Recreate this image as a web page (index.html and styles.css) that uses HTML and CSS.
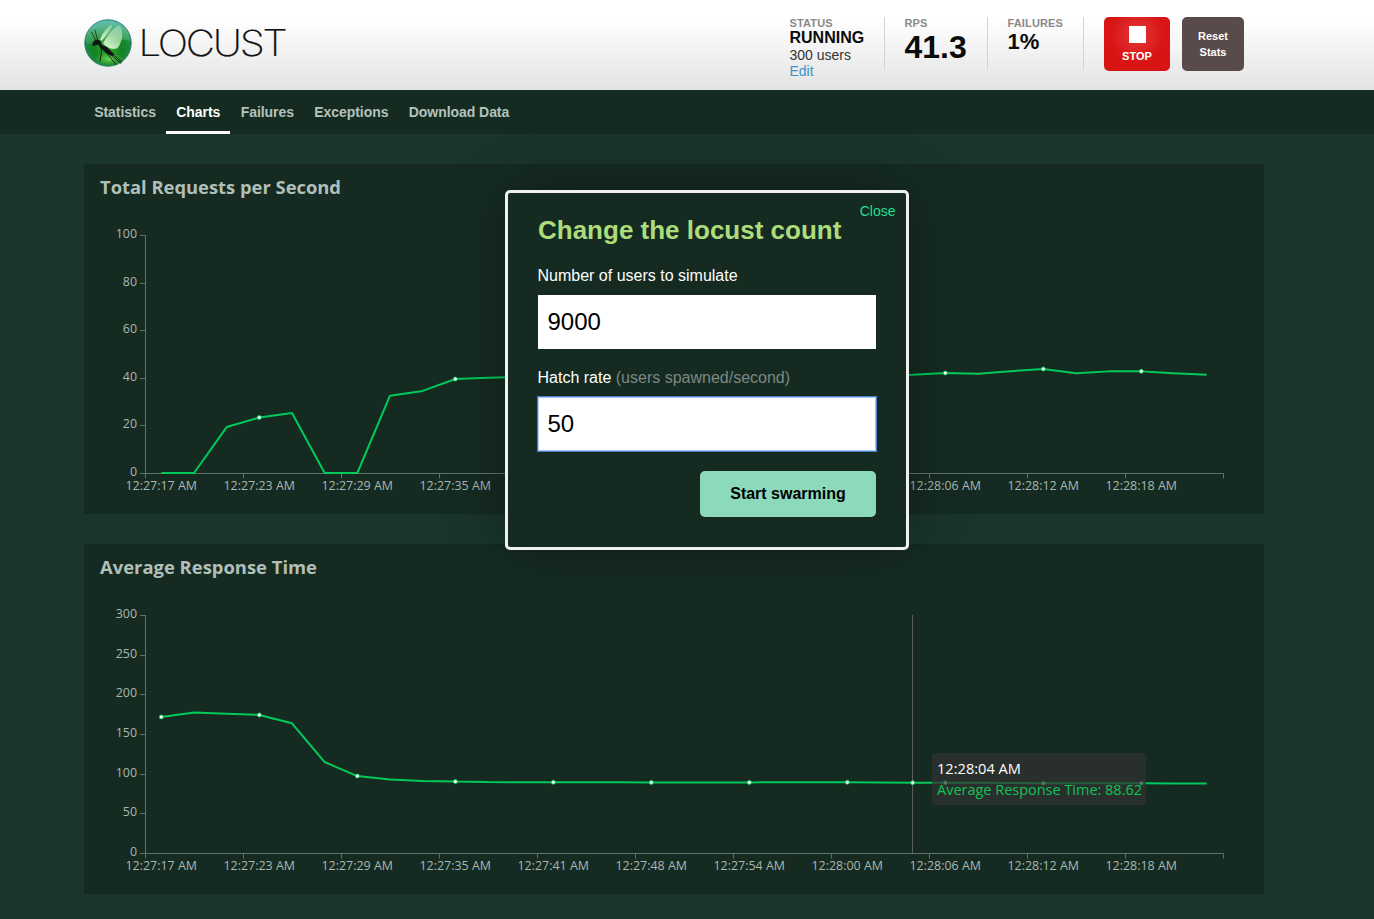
FILE: index.html
```html
<!DOCTYPE html>
<html lang="en">
<head>
<meta charset="utf-8">
<title>Locust</title>
<link rel="stylesheet" href="styles.css">
</head>
<body>
<header class="top">
  <svg class="logo" width="202" height="50" viewBox="0 0 202 50">
    <defs>
      <radialGradient id="orb" cx=".5" cy=".6" r=".6">
        <stop offset="0" stop-color="#3cae32"/><stop offset=".5" stop-color="#128222"/><stop offset=".8" stop-color="#1f8a48"/><stop offset="1" stop-color="#2a8a7c"/>
      </radialGradient>
      <linearGradient id="sheen" x1="0" y1="0" x2="0" y2="1">
        <stop offset="0" stop-color="#6fd0cc" stop-opacity=".75"/><stop offset="1" stop-color="#a5e29a" stop-opacity=".15"/>
      </linearGradient>
      <linearGradient id="wing" x1=".7" y1="0" x2=".3" y2="1">
        <stop offset="0" stop-color="#c3f0c0" stop-opacity=".45"/><stop offset="1" stop-color="#f4fff0" stop-opacity=".85"/>
      </linearGradient>
      <radialGradient id="glow"><stop offset="0" stop-color="#6fd85a"/><stop offset="1" stop-color="#4ec43c" stop-opacity="0"/></radialGradient>
    </defs>
    <circle cx="24" cy="25" r="23.3" fill="url(#orb)" stroke="#28786a" stroke-width=".8"/>
    <ellipse cx="25" cy="41" rx="15" ry="7" fill="url(#glow)"/>
    <path d="M2 25C2 9 13 2.500 24 2.500S46 10 46 23C33 18 17 29 2 25Z" fill="url(#sheen)"/>
    <path d="M16 22C18 15 24 8 28 6.500c1.500 1.500-4 10-10.500 16Z" fill="url(#wing)"/>
    <path d="M19 25.500C23 18 29 9 35 7.500c5 4 4 15-1 22-4 3-10 1-15-4Z" fill="url(#wing)"/>
    <g fill="none" stroke="#101713" stroke-linecap="round">
      <path d="M12 23L7.500 14M13.500 22L11 12" stroke-width=".7"/>
      <path d="M17 29l.5 5-1.500 9M25 35l12 10.500M22 34l10 12.500M27 35l11 9" stroke-width=".9"/>
    </g>
    <path d="M8.500 25l2-2.500 3-1 3 1.500 1.500 4 5 2 7.500 7.500-2 1.500-5.500-2-7-6.500-1.500-3-4 1-2 .5Z" fill="#101713"/>
    <text class="wordmark" x="54.500" y="38" textLength="147" lengthAdjust="spacingAndGlyphs">LOCUST</text>
  </svg>
  <div class="stat stat-status">
    <span class="label">STATUS</span>
    <strong>RUNNING</strong>
    <span class="users">300 users</span>
    <a class="edit">Edit</a>
  </div>
  <div class="stat stat-rps"><span class="label">RPS</span><strong>41.3</strong></div>
  <div class="stat stat-fail"><span class="label">FAILURES</span><strong>1%</strong></div>
  <a class="btn stop"><i class="square"></i>STOP</a>
  <a class="btn reset">Reset<br>Stats</a>
</header>
<nav class="tabs">
  <a>Statistics</a><a class="active">Charts</a><a>Failures</a><a>Exceptions</a><a>Download Data</a>
</nav>
<main class="charts">
  <svg class="panel" id="rps" width="1180" height="350"></svg>
  <section class="chart-wrap">
    <svg class="panel" id="response" width="1180" height="350"></svg>
    <div class="tip">
      <svg width="214" height="52">
        <text class="tip-time" x="5" y="21" textLength="84" lengthAdjust="spacingAndGlyphs">12:28:04 AM</text>
        <text class="tip-value" x="5" y="42" textLength="205" lengthAdjust="spacingAndGlyphs">Average Response Time: 88.62</text>
      </svg>
    </div>
  </section>
</main>
<div class="dialog">
  <a class="close">Close</a>
  <h2>Change the locust count</h2>
  <label>Number of users to simulate</label>
  <div class="field">9000</div>
  <label>Hatch rate <span>(users spawned/second)</span></label>
  <div class="field focused">50</div>
  <div class="submit">Start swarming</div>
</div>
<script src="app.js"></script>
</body>
</html>
```
FILE: styles.css
```css
* { box-sizing: border-box; }
body {
  margin: 0;
  height: 919px;
  overflow: hidden;
  position: relative;
  background: #1a352a;
  font-family: "Liberation Sans", Arial, sans-serif;
}
.top {
  height: 90px;
  padding: 17px 0 0 84px;
  display: flex;
  align-items: flex-start;
  background: linear-gradient(#fff 0, #fff 20%, #e3e3e3 100%);
}
.logo { margin-top: 1px; flex: none; }
.wordmark { font: 200 36px Inter, sans-serif; letter-spacing: -2px; fill: #111; stroke: #111; stroke-width: .2; }
.stat { height: 53px; display: flex; flex-direction: column; border-right: 1px solid #d3d3d3; color: #0b0b0b; white-space: nowrap; }
.label { font-size: 11px; line-height: 12px; letter-spacing: .15px; font-weight: 700; color: #8a8a8a; }
.stat-status { width: 95px; margin-left: 503.5px; }
.stat-status strong { font-size: 16px; line-height: 17px; }
.users { font-size: 14px; line-height: 17px; padding-top: 1px; color: #333; }
.edit { font-size: 14px; line-height: 15px; color: #3a94c9; }
.stat-rps { width: 103px; padding-left: 20px; }
.stat-rps strong { font-size: 32px; line-height: 36px; }
.stat-fail { width: 96px; padding-left: 20px; }
.stat-fail strong { font-size: 22px; line-height: 26px; }
.btn { height: 54px; border-radius: 5px; color: #fff; font-size: 11px; font-weight: 700; text-align: center; line-height: 16px; }
.stop { width: 66px; margin-left: 20.5px; background: radial-gradient(circle at 50% 33%, #e2393b 0, #d91414 27px); }
.square { display: block; width: 17px; height: 17px; margin: 9px auto 5px; background: #fff; }
.reset { width: 62px; margin-left: 12px; padding-top: 11px; background: #594b49; }
.tabs { height: 44px; padding-left: 84px; display: flex; background: #152b22; }
.tabs a { height: 44px; padding: 0 10.2px; line-height: 44px; font-size: 14px; letter-spacing: -.055px; font-weight: 700; color: #b3c3bc; white-space: nowrap; }
.tabs .active { color: #fff; border-bottom: 3px solid #fff; }
.charts { padding: 30px 0 0 84px; display: flex; flex-direction: column; gap: 30px; width: 1264px; }
.panel { display: block; background: #152b22; border-radius: 4px; box-shadow: inset 0 0 0 1px #13271f; }
.chart-wrap { position: relative; }
.title, .tick, .tip { font-family: "Open Sans", "Noto Sans", sans-serif; }
.title { font-size: 18px; font-weight: 700; fill: #b0bfb8; }
.tick { font-size: 12px; fill: #a9b7b0; }
.axis { stroke: #5f716a; fill: none; }
.line { stroke: #00ca5a; stroke-width: 2; fill: none; stroke-linejoin: bevel; }
.dot { fill: #fff; stroke: #00ca5a; stroke-width: .8; }
.pointer { stroke: #5a5f5c; }
.tip { position: absolute; left: 848px; top: 209px; width: 214px; height: 52px; border-radius: 4px; background: rgba(50, 50, 50, .7); font-size: 14px; }
.tip svg { display: block; }
.tip-time { fill: #fff; }
.tip-value { fill: #0fc456; }
.dialog {
  position: absolute;
  left: 505px;
  top: 190px;
  width: 404px;
  height: 360px;
  padding: 21px 30px;
  border: 3px solid #f0f0f0;
  border-radius: 5px;
  background: #152b22;
  box-shadow: 0 0 60px rgba(0, 0, 0, .3);
  color: #fff;
}
.close { position: absolute; right: 10.5px; top: 10px; font-size: 14px; line-height: 16px; color: #22df92; }
.dialog h2 { margin: 0 0 20px; font-size: 26px; line-height: 32px; color: #addc7c; white-space: nowrap; }
.dialog label { display: block; margin-left: -.5px; font-size: 16px; line-height: 20px; }
.dialog label span { color: #7d8782; }
.field { height: 54px; margin: 9px 0 19px; padding-left: 9.5px; background: #fff; color: #000; font-size: 24px; line-height: 54px; }
.focused { margin-bottom: 20px; box-shadow: 0 0 0 1px #4f7fc9, inset 0 0 0 1px #a9c8fa; }
.submit { width: 176px; height: 46px; margin-left: auto; border-radius: 5px; background: #8cdabb; color: #000; font-size: 16px; font-weight: 700; line-height: 45px; text-align: center; }
```
FILE: app.js
```js
const times = ['12:27:17', '12:27:23', '12:27:29', '12:27:35', '12:27:41', '12:27:48', '12:27:54', '12:28:00', '12:28:06', '12:28:12', '12:28:18'];
const left = 61.5, base = 309.5, height = 238, step = 98 / 3;

function drawChart(id, title, titleWidth, max, interval, values, labels, pointerIndex) {
  const x = i => left - 0.5 + step * (i + 0.5);
  const y = v => base - 0.5 - v / max * height;
  let out = `<text class="title" x="16" y="30" textLength="${titleWidth}" lengthAdjust="spacingAndGlyphs">${title}</text>`;
  let axis = `M${left} ${base - height - 0.5}V${base}H1139.5`;
  for (let v = 0; v <= max; v += interval) {
    const ty = Math.round(base - v / max * height - 0.5) + 0.5;
    axis += `M56 ${ty}H${left}`;
    out += `<text class="tick" x="53" y="${ty + 2.5}" text-anchor="end" textLength="${String(v).length * 7.1}" lengthAdjust="spacingAndGlyphs">${v}</text>`;
  }
  for (let i = 0; i <= 11; i++) axis += `M${left + i * 98} ${base}v5`;
  out += `<path class="axis" d="${axis}"/>`;
  labels.forEach((t, i) => {
    if (t) out += `<text class="tick" x="${41.5 + i * 98}" y="326" textLength="71.5" lengthAdjust="spacingAndGlyphs">${t} AM</text>`;
  });
  if (pointerIndex) out += `<path class="pointer" d="M828.5 71V309"/>`;
  out += `<polyline class="line" points="${values.map((v, i) => x(i) + ',' + y(v)).join(' ')}"/>`;
  values.forEach((v, i) => {
    if ((i % 3 === 0 && v > 0) || i === pointerIndex) out += `<circle class="dot" cx="${x(i)}" cy="${y(v)}" r="2"/>`;
  });
  document.getElementById(id).innerHTML = out;
}

// Labels that the dialog covers are left out of the upper chart.
drawChart('rps', 'Total Requests per Second', 241, 100, 20,
  [0, 0, 19.3, 23.3, 25.2, 0, 0, 32.5, 34.5, 39.5, 40, 40.3, 40.5, 41, 41, 41, 41, 41, 41, 41, 41, 41, 41, 41.3, 42, 41.7, 42.8, 43.7, 41.9, 42.7, 42.7, 41.9, 41.3],
  times.map((t, i) => (i > 3 && i < 8 ? '' : t)));
drawChart('response', 'Average Response Time', 217, 300, 50,
  [171.5, 177, 175.5, 174, 163.5, 114.5, 97, 92.5, 90.8, 90, 89.4, 89.2, 89.2, 89.3, 89.2, 89, 89, 89, 89, 89.2, 89.3, 89.1, 88.8, 88.62, 88.5, 88.4, 88.3, 88, 88, 88, 87.8, 87.6, 87.6],
  times, 23);
```
